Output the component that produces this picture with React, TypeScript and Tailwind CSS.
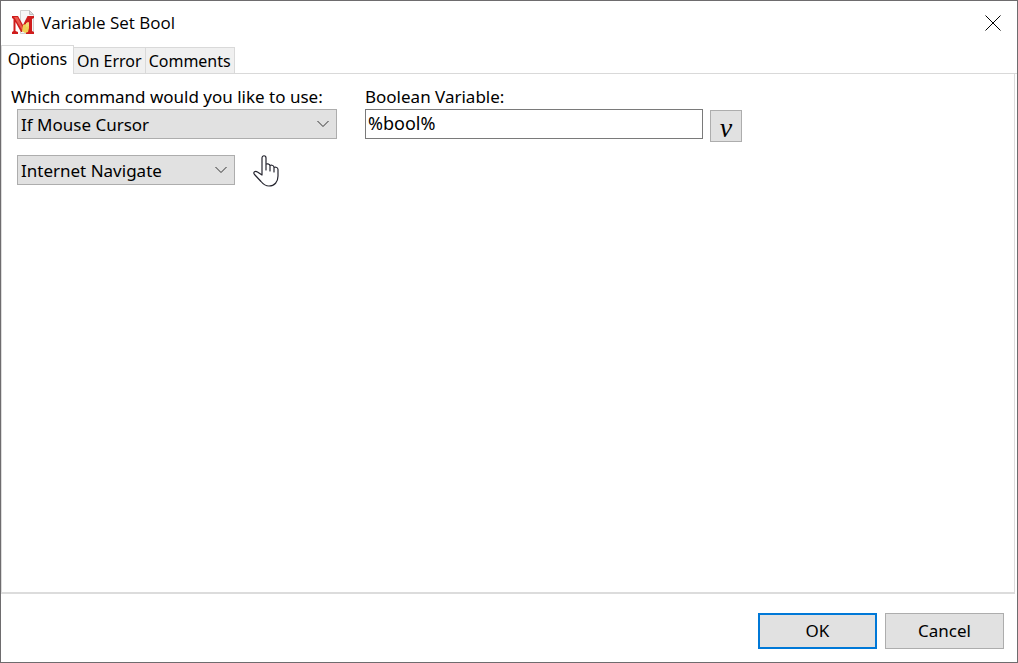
import React, { useState } from "react";
import clsx from "clsx";

const TABS = ["Options", "On Error", "Comments"];

const AppIcon: React.FC = () => (
  <svg width="24" height="26" viewBox="0 0 24 26" aria-hidden="true">
    <path d="M9.5 .5h9l4 4v19h-13z" fill="#f6f6f6" stroke="#cfcfcf" />
    <path d="M18.500 .5v4h4z" fill="#dcdcdc" stroke="#c0c0c0" />
    <path
      d="M1 6h6l5 9 4.500-9H23v2l-2 1v12l2 1v2h-8v-2l1.500-1v-9L11 22h-1L4.500 12v9L7 22v2H1v-2l1.500-1V9L1 8z"
      fill="#cf1c1c"
    />
    <path d="M3 7h3.500l5.500 11-1 2z" fill="#ea5a4e" />
    <path d="M12 15l3-1 3 1v3l-1 4-3 1-3-2z" fill="#f0cf55" />
    <path d="M15 13l3-1v4l-3 1z" fill="#f3d976" />
  </svg>
);

const HandCursor: React.FC = () => (
  <svg width="26" height="32" viewBox="0 0 26 32" aria-label="Hand cursor" role="img">
    <path
      d="M9 20V3c0-3 4-3 4 0v12V9.500c0-1 4-1 4 1.500v5-5c0-1.500 4-1 4 1.500V17v-4c0-1.500 4-1 4 1.500V21c0 6-3.500 10-9 10-4 0-6-2-8-4.500L1.500 19.500c-2-2.500 1-4 3-2.500z"
      fill="#fff"
      stroke="#25252f"
      strokeWidth="1.200"
      strokeLinejoin="round"
    />
  </svg>
);

interface DropDownProps {
  id: string;
  label: string;
  value: string;
  className: string;
}

const DropDown: React.FC<DropDownProps> = ({ id, label, value, className }) => (
  <div className={clsx("relative h-[30px]", className)}>
    <select
      id={id}
      aria-label={label}
      defaultValue={value}
      className="block h-full w-full appearance-none border border-[#adadad] bg-[#e1e1e1] pt-px pl-[3px] pr-8 outline-none"
    >
      <option>{value}</option>
    </select>
    <svg
      width="12"
      height="8"
      viewBox="0 0 12 8"
      className="pointer-events-none absolute right-2 top-[11px]"
      aria-hidden="true"
    >
      <path d="M.5 1l5.500 5.500L11.500 1" fill="none" stroke="#333" />
    </svg>
  </div>
);

const App: React.FC = () => {
  const [tab, setTab] = useState("Options");
  const [variable, setVariable] = useState("%bool%");

  return (
    <div className="flex min-h-screen flex-col border border-[#6e6c6e] bg-white font-['Noto_Sans',sans-serif] text-[17px] leading-[22px] text-black">
      <header className="flex h-[44px] items-center pl-[10px] pr-4">
        <AppIcon />
        <h1 className="ml-[6px] font-['Open_Sans',sans-serif] text-[17px]">Variable Set Bool</h1>
        <button type="button" aria-label="Close" className="ml-auto">
          <svg width="16" height="16" viewBox="0 0 16 16">
            <path d="M.5.5l15 15M15.500.5l-15 15" stroke="#000" />
          </svg>
        </button>
      </header>

      <div role="tablist" className="flex items-end text-[16px]">
        {TABS.map((name) => (
          <button
            key={name}
            type="button"
            role="tab"
            aria-selected={tab === name}
            onClick={() => setTab(name)}
            className={clsx(
              "border-t border-r border-[#d9d9d9] whitespace-nowrap",
              tab === name
                ? "h-[29px] w-[73px] border-l bg-white pb-[2px]"
                : "h-[27px] border-b bg-[#f0f0f0] px-[3px]"
            )}
          >
            {name}
          </button>
        ))}
        <div className="h-px flex-1 bg-[#d9d9d9]" />
      </div>

      <main className="mr-[2px] flex-1 border-x border-b-2 border-[#dcdcdc] pt-3 pl-[9px] pr-4">
        <div className="flex">
          <div className="w-[354px]">
            <label htmlFor="command" className="block">
              Which command would you like to use:
            </label>
            <div className="mt-px ml-[6px]">
              <DropDown id="command" label="Command" value="If Mouse Cursor" className="w-[320px]" />
            </div>
          </div>
          <div>
            <label htmlFor="variable" className="block">
              Boolean Variable:
            </label>
            <div className="mt-px flex items-start gap-[7px]">
              <input
                id="variable"
                type="text"
                value={variable}
                onChange={(e) => setVariable(e.target.value)}
                className="h-[30px] w-[338px] border border-[#7a7a7a] bg-white px-[2px] pb-[2px] text-[18px] outline-none"
              />
              <button
                type="button"
                aria-label="Insert variable"
                className="mt-px h-8 w-8 border border-[#adadad] bg-[#e1e1e1] pt-1 font-['Liberation_Serif',serif] text-[28px] leading-[22px] italic"
              >
                v
              </button>
            </div>
          </div>
        </div>
        <div className="mt-[13px] ml-[6px] flex items-start gap-[18px]">
          <DropDown id="cursor" label="Mouse cursor" value="Internet Navigate" className="w-[218px]" />
          <HandCursor />
        </div>
      </main>

      <footer className="flex justify-end gap-2 pt-[19px] pr-[13px] pb-[13px]">
        <button type="button" className="h-9 w-[119px] border-2 border-[#0078d7] bg-[#e1e1e1]">
          OK
        </button>
        <button type="button" className="h-9 w-[119px] border border-[#adadad] bg-[#e1e1e1]">
          Cancel
        </button>
      </footer>
    </div>
  );
};

export default App;
